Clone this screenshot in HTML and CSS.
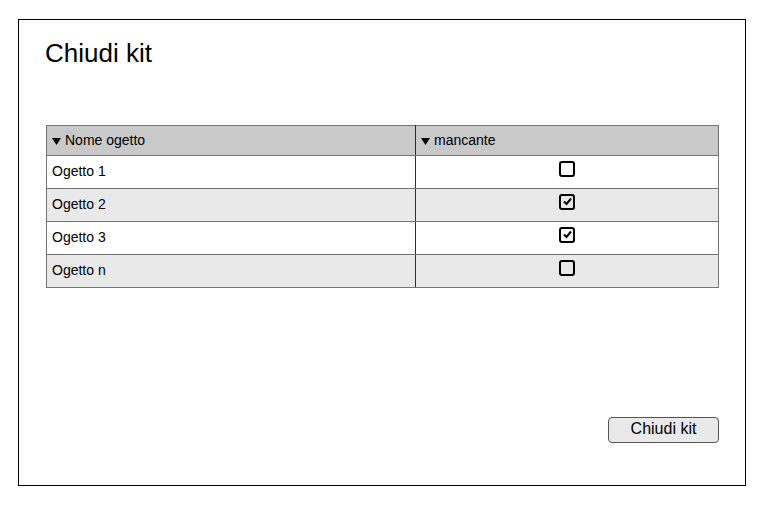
FILE: index.html
```html
<!DOCTYPE html>
<html lang="it">
<head>
<meta charset="utf-8">
<title>Chiudi kit</title>
<link rel="stylesheet" href="styles.css">
</head>
<body>
<div class="frame">
  <h1 class="title">Chiudi kit</h1>
  <table class="items">
    <colgroup><col class="c1"><col class="c2"></colgroup>
    <thead>
      <tr class="head">
        <th><svg class="tri" width="9" height="7" viewBox="0 0 9 7"><path d="M0 0H9L4.5 7Z" fill="#000"/></svg>Nome ogetto</th>
        <th><svg class="tri" width="9" height="7" viewBox="0 0 9 7"><path d="M0 0H9L4.5 7Z" fill="#000"/></svg>mancante</th>
      </tr>
    </thead>
    <tbody>
      <tr><td>Ogetto 1</td><td class="chk"><span class="box"></span></td></tr>
      <tr class="alt"><td>Ogetto 2</td><td class="chk"><span class="box"><svg width="11" height="11" viewBox="0 0 11 11"><path d="M2 5.5L4.5 8L9 2.5" fill="none" stroke="#000" stroke-width="2"/></svg></span></td></tr>
      <tr><td>Ogetto 3</td><td class="chk"><span class="box"><svg width="11" height="11" viewBox="0 0 11 11"><path d="M2 5.5L4.5 8L9 2.5" fill="none" stroke="#000" stroke-width="2"/></svg></span></td></tr>
      <tr class="alt"><td>Ogetto n</td><td class="chk"><span class="box"></span></td></tr>
    </tbody>
  </table>
  <div class="actions">
    <button class="btn" type="button">Chiudi kit</button>
  </div>
</div>
</body>
</html>
```
FILE: styles.css
```css
html, body {
  margin: 0;
  padding: 0;
  background: #fff;
}
body {
  font-family: "Liberation Sans", Arial, sans-serif;
  color: #000;
}
.frame {
  box-sizing: border-box;
  margin: 19px 0 0 18px;
  width: 728px;
  height: 467px;
  border: 1px solid #000;
  padding: 18px 26px 42px 26px;
  display: flex;
  flex-direction: column;
}
.title {
  margin: 0;
  font-size: 26px;
  line-height: 30px;
  font-weight: normal;
}
.items {
  margin-top: 57px;
  margin-left: 1px;
  border-collapse: collapse;
  table-layout: fixed;
  width: 672px;
  font-size: 14px;
}
.c1 { width: 369px; }
.c2 { width: 303px; }
.items th, .items td {
  border: 1px solid #747474;
  padding: 0 5px 2px 5px;
  text-align: left;
  font-weight: normal;
  vertical-align: middle;
}
.items th:first-child, .items td:first-child {
  border-right: 1px solid #2e2e2e;
}
.head {
  height: 30px;
  background: #c9c9c9;
}
.items tbody tr {
  height: 33px;
}
.items tbody tr.alt {
  background: #e9e9e9;
}
.tri {
  margin-right: 4px;
  vertical-align: 0;
}
.chk {
  text-align: center !important;
}
.box {
  display: inline-flex;
  align-items: center;
  justify-content: center;
  box-sizing: border-box;
  width: 16px;
  height: 16px;
  border: 2px solid #000;
  border-radius: 3px;
  vertical-align: middle;
  position: relative;
  top: -3px;
}
.actions {
  margin-top: auto;
  display: flex;
  justify-content: flex-end;
}
.btn {
  box-sizing: border-box;
  width: 111px;
  height: 26px;
  margin: 0;
  padding: 0 0 2px 0;
  border: 1px solid #555;
  border-radius: 4px;
  background: #e9e9e9;
  font-family: "Liberation Sans", Arial, sans-serif;
  font-size: 16px;
  color: #000;
  line-height: 20px;
}
```
